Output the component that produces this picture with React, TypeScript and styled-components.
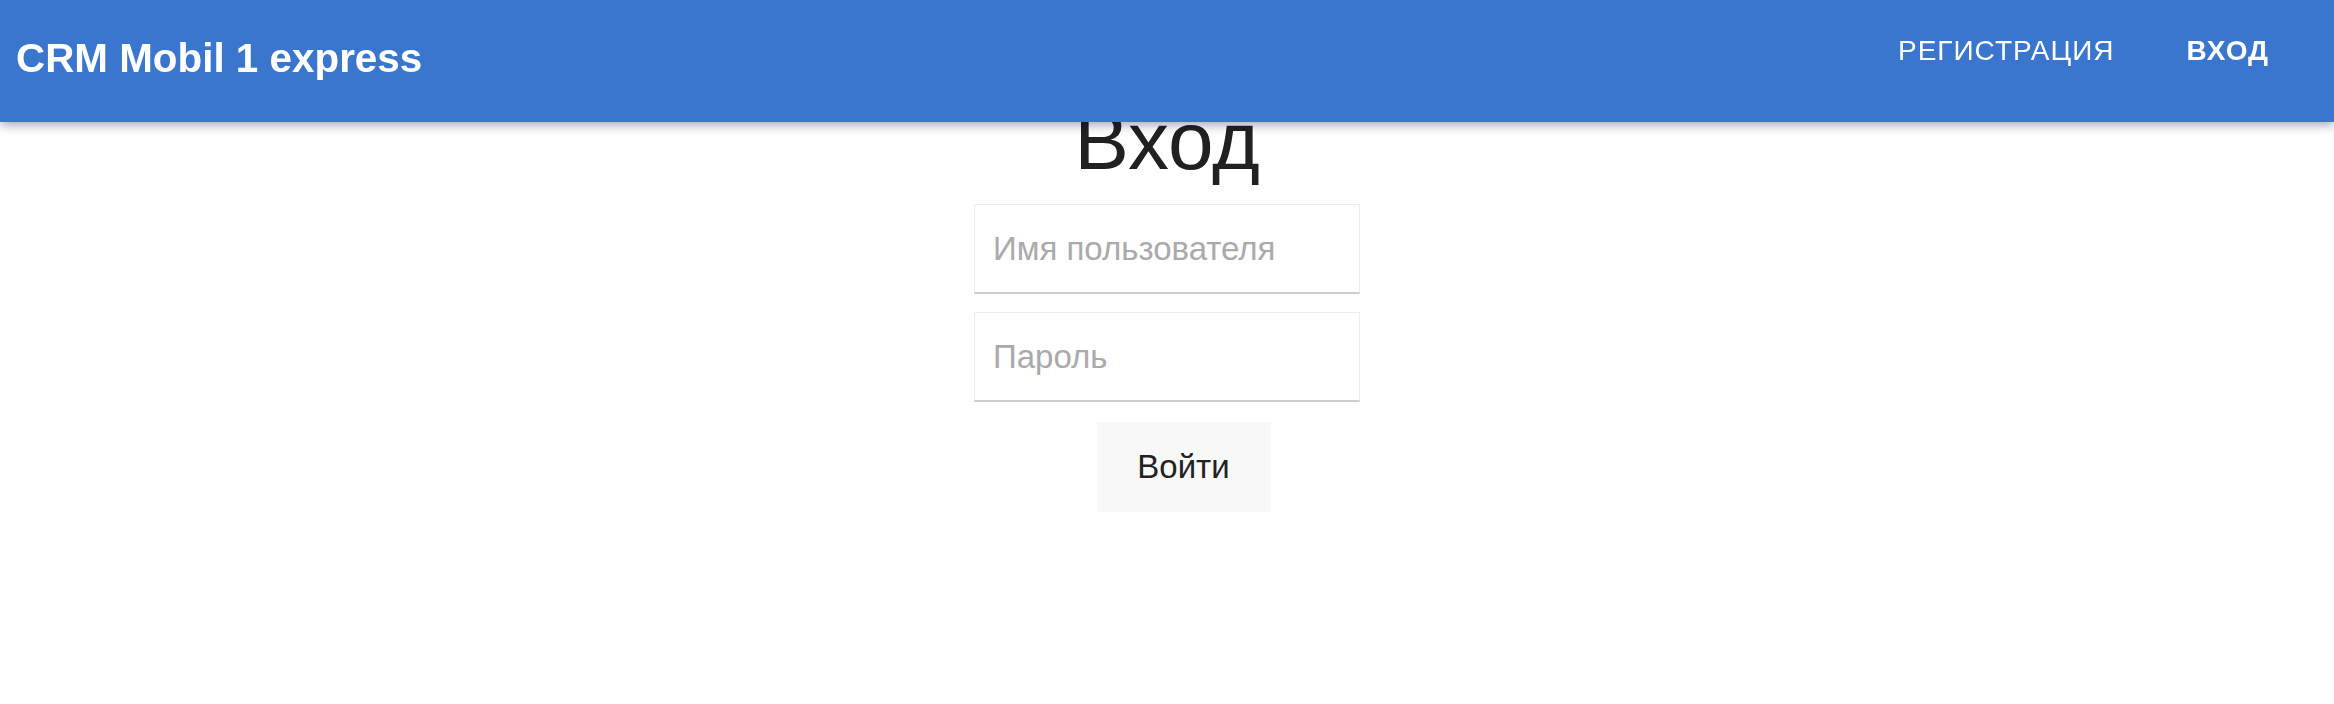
import React from "react";
import styled, { createGlobalStyle } from "styled-components";

const GlobalStyle = createGlobalStyle`
  html, body {
    margin: 0;
    padding: 0;
    background: #ffffff;
    font-family: "Liberation Sans", Arial, sans-serif;
  }
  * { box-sizing: border-box; }
`;

const AppBar = styled.header`
  position: fixed;
  top: 0;
  left: 0;
  right: 0;
  height: 122px;
  background: #3a76ce;
  box-shadow: 0 3px 10px rgba(0, 0, 0, 0.35);
  display: flex;
  align-items: flex-start;
  justify-content: space-between;
  padding: 35px 29px 0 16px;
  z-index: 10;
`;

const Brand = styled.div`
  color: #ffffff;
  font-size: 40.4px;
  font-weight: 700;
  line-height: normal;
`;

const Nav = styled.nav`
  display: flex;
  align-items: flex-start;
`;

const NavButton = styled.button<{ $active?: boolean }>`
  background: transparent;
  border: none;
  color: #ffffff;
  font-family: "Liberation Sans", Arial, sans-serif;
  font-size: 28px;
  font-weight: ${(p) => (p.$active ? 700 : 400)};
  letter-spacing: 1px;
  text-transform: uppercase;
  line-height: normal;
  padding: 0 36px;
  cursor: pointer;
`;

const Main = styled.main`
  display: flex;
  flex-direction: column;
  align-items: center;
  padding-top: 94px;
`;

const Title = styled.h1`
  margin: 0 0 16px;
  font-size: 82px;
  font-weight: 400;
  line-height: normal;
  color: #212121;
`;

const Form = styled.form`
  display: flex;
  flex-direction: column;
  align-items: center;
`;

const Field = styled.input`
  width: 386px;
  height: 90px;
  margin-bottom: 18px;
  padding: 0 18px;
  border: 1px solid #ececec;
  border-bottom: 2px solid #cdcdcd;
  font-family: "Liberation Sans", Arial, sans-serif;
  font-size: 33px;
  color: #212121;
  background: #ffffff;
  outline: none;
  &::placeholder {
    color: #aaaaaa;
  }
`;

const SubmitButton = styled.button`
  margin-top: 2px;
  margin-left: 33px;
  width: 174px;
  height: 90px;
  border: none;
  background: #f8f8f8;
  color: #222222;
  font-family: "Liberation Sans", Arial, sans-serif;
  font-size: 33px;
  cursor: pointer;
`;

export default function App() {
  return (
    <>
      <GlobalStyle />
      <AppBar>
        <Brand>CRM Mobil 1 express</Brand>
        <Nav>
          <NavButton>Регистрация</NavButton>
          <NavButton $active>Вход</NavButton>
        </Nav>
      </AppBar>
      <Main>
        <Title>Вход</Title>
        <Form onSubmit={(e) => e.preventDefault()}>
          <Field type="text" placeholder="Имя пользователя" />
          <Field type="password" placeholder="Пароль" />
          <SubmitButton type="submit">Войти</SubmitButton>
        </Form>
      </Main>
    </>
  );
}
